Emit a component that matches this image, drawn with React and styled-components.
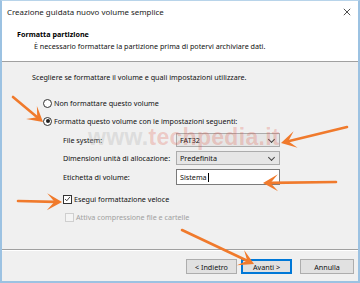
import React from 'react';
import styled, { createGlobalStyle } from 'styled-components';

const GlobalStyle = createGlobalStyle`
  html, body {
    margin: 0;
    padding: 0;
    background: #fff;
  }
  body {
    font-family: 'Noto Sans', 'Open Sans', sans-serif;
    font-size: 7.2px;
    color: #111;
  }
`;

const ARROWS = [
  [13, 97, 43, 122],
  [347, 127, 281, 143],
  [336, 182, 263, 183],
  [18, 201, 62, 202],
  [182, 230, 254, 264],
];

function arrowParts([x1, y1, x2, y2]) {
  const len = Math.hypot(x2 - x1, y2 - y1);
  const ux = (x2 - x1) / len;
  const uy = (y2 - y1) / len;
  const nx = -uy;
  const ny = ux;
  const L = 15;
  const W = 17;
  const bx = x2 - ux * L;
  const by = y2 - uy * L;
  const mx = x2 - ux * L * 0.5;
  const my = y2 - uy * L * 0.5;
  const head = [
    [x2, y2],
    [bx + (nx * W) / 2, by + (ny * W) / 2],
    [mx, my],
    [bx - (nx * W) / 2, by - (ny * W) / 2],
  ]
    .map((p) => p.map((v) => v.toFixed(1)).join(','))
    .join(' ');
  return { line: { x1, y1, x2: mx, y2: my }, head };
}

export default function App() {
  return (
    <>
      <GlobalStyle />
      <Page>
        <Window>
          <TitleBar>
            <span>Creazione guidata nuovo volume semplice</span>
            <CloseIcon viewBox="0 0 10 10">
              <path d="M1 1 L9 9 M9 1 L1 9" />
            </CloseIcon>
          </TitleBar>

          <Header>
            <Heading>Formatta partizione</Heading>
            <Subtitle>
              È necessario formattare la partizione prima di potervi archiviare dati.
            </Subtitle>
          </Header>

          <Body>
            <Line>Scegliere se formattare il volume e quali impostazioni utilizzare.</Line>

            <Options>
              <Option>
                <Radio />
                Non formattare questo volume
              </Option>
              <Option $gap>
                <Radio $checked />
                Formatta questo volume con le impostazioni seguenti:
              </Option>
            </Options>

            <Form>
              <FieldLabel>File system:</FieldLabel>
              <Combo>
                FAT32
                <Chevron />
              </Combo>
              <FieldLabel>Dimensioni unità di allocazione:</FieldLabel>
              <Combo>
                Predefinita
                <Chevron />
              </Combo>
              <FieldLabel>Etichetta di volume:</FieldLabel>
              <TextBox>
                Sistema<Caret />
              </TextBox>
            </Form>

            <Check>
              <Box $checked>
                <svg viewBox="0 0 10 10" width="8" height="8">
                  <path d="M1.5 5 L4 7.5 L8.5 2" fill="none" stroke="#222" strokeWidth="1.2" />
                </svg>
              </Box>
              Esegui formattazione veloce
            </Check>
            <Check $disabled>
              <Box $disabled />
              Attiva compressione file e cartelle
            </Check>
          </Body>

          <Footer>
            <Button>&lt; Indietro</Button>
            <Button $primary>Avanti &gt;</Button>
            <Button $cancel>Annulla</Button>
          </Footer>
        </Window>

        <Watermark>
          <span>www.</span>techpedia.it
        </Watermark>

        <Overlay viewBox="0 0 360 283">
          {ARROWS.map((a, i) => {
            const { line, head } = arrowParts(a);
            return (
              <g key={i}>
                <line {...line} stroke="#f07a2c" strokeWidth="2.6" strokeLinecap="round" />
                <polygon points={head} fill="#f07a2c" />
              </g>
            );
          })}
        </Overlay>
      </Page>
    </>
  );
}

const Page = styled.div`
  position: relative;
  width: 360px;
  height: 283px;
  overflow: hidden;
`;

const Window = styled.div`
  box-sizing: border-box;
  width: 360px;
  height: 283px;
  display: flex;
  flex-direction: column;
  border: 2px solid #9cc2e2;
  border-top: 1px solid #b8d4ea;
  background: #f0f0f0;
`;

const TitleBar = styled.div`
  height: 21px;
  flex: none;
  display: flex;
  align-items: center;
  justify-content: space-between;
  padding: 0 6px 0 5px;
  background: #fff;
  font-size: 7.9px;
  color: #1a1a1a;
`;

const CloseIcon = styled.svg`
  width: 8px;
  height: 8px;
  margin-right: 1px;

  path {
    stroke: #222;
    stroke-width: 1;
    fill: none;
  }
`;

const Header = styled.div`
  height: 40px;
  flex: none;
  box-sizing: border-box;
  padding: 6px 0 0 15px;
  background: #fff;
  border-bottom: 1px solid #a0a0a0;
`;

const Heading = styled.div`
  font-weight: 700;
  line-height: 12px;
  color: #000;
`;

const Subtitle = styled.div`
  line-height: 12px;
  padding-left: 17px;
`;

const Body = styled.div`
  flex: 1;
  padding: 9px 0 0 30px;
`;

const Line = styled.div`
  line-height: 12px;
`;

const Options = styled.div`
  margin: 14px 0 0 11px;
`;

const Option = styled.div`
  display: flex;
  align-items: center;
  height: 12px;
  margin-top: ${(p) => (p.$gap ? '6px' : '0')};
`;

const Radio = styled.span`
  box-sizing: border-box;
  width: 9px;
  height: 9px;
  margin-right: 2px;
  border-radius: 50%;
  border: 1px solid #333;
  background: #fff;
  position: relative;

  &::after {
    content: '';
    display: ${(p) => (p.$checked ? 'block' : 'none')};
    position: absolute;
    left: 1.5px;
    top: 1.5px;
    width: 4px;
    height: 4px;
    border-radius: 50%;
    background: #222;
  }
`;

const Form = styled.div`
  display: grid;
  grid-template-columns: 113px 104px;
  grid-template-rows: 14px 14px 16px;
  row-gap: 4px;
  align-items: center;
  margin: 6px 0 0 31px;
`;

const FieldLabel = styled.div`
  line-height: 12px;
`;

const Combo = styled.div`
  box-sizing: border-box;
  height: 14px;
  display: flex;
  align-items: center;
  justify-content: space-between;
  padding: 0 5px 0 3px;
  background: #e6e6e6;
  border: 1px solid #acacac;
`;

const Chevron = styled.span`
  width: 4px;
  height: 4px;
  border-right: 1px solid #444;
  border-bottom: 1px solid #444;
  transform: translateY(-1px) rotate(45deg);
`;

const TextBox = styled.div`
  box-sizing: border-box;
  height: 16px;
  display: flex;
  align-items: center;
  padding: 0 3px;
  background: #fff;
  border: 1px solid #7a7a7a;
`;

const Caret = styled.span`
  width: 1px;
  height: 9px;
  margin-left: 1px;
  background: #000;
`;

const Check = styled.div`
  display: flex;
  align-items: center;
  height: 12px;
  margin: ${(p) => (p.$disabled ? '6px 0 0 33px' : '8px 0 0 31px')};
  color: ${(p) => (p.$disabled ? '#a0a0a0' : '#111')};
`;

const Box = styled.span`
  box-sizing: border-box;
  width: 9px;
  height: 9px;
  margin-right: 2px;
  display: flex;
  align-items: center;
  justify-content: center;
  background: ${(p) => (p.$disabled ? '#f4f4f4' : '#fff')};
  border: 1px solid ${(p) => (p.$disabled ? '#cfcfcf' : '#333')};
`;

const Footer = styled.div`
  height: 32px;
  flex: none;
  box-sizing: border-box;
  display: flex;
  justify-content: flex-end;
  align-items: flex-start;
  padding: 9px 4px 0 0;
  border-top: 1px solid #a0a0a0;
  box-shadow: inset 0 1px 0 #fff;
`;

const Button = styled.div`
  box-sizing: border-box;
  width: ${(p) => (p.$cancel ? '54px' : '51px')};
  height: 15px;
  margin-left: ${(p) => (p.$cancel ? '8px' : p.$primary ? '4px' : '0')};
  display: flex;
  align-items: center;
  justify-content: center;
  background: #e1e1e1;
  border: 1px solid ${(p) => (p.$primary ? '#0078d7' : '#adadad')};
  box-shadow: ${(p) => (p.$primary ? 'inset 0 0 0 1px #0078d7' : 'none')};
`;

const Watermark = styled.div`
  position: absolute;
  left: 88px;
  top: 124px;
  font-family: 'Liberation Sans', Arial, sans-serif;
  font-weight: 700;
  font-size: 23px;
  letter-spacing: 0.3px;
  color: rgba(222, 70, 50, 0.24);
  pointer-events: none;

  span {
    color: rgba(190, 190, 190, 0.4);
  }
`;

const Overlay = styled.svg`
  position: absolute;
  left: 0;
  top: 0;
  width: 360px;
  height: 283px;
  pointer-events: none;
`;
